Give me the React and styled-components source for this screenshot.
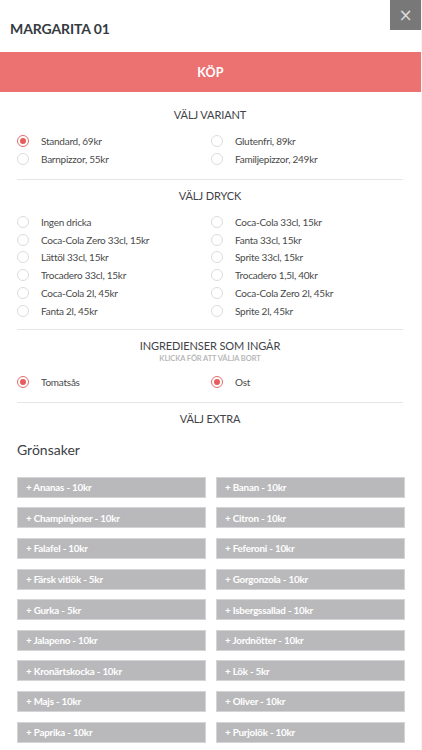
import React from "react";
import styled, { createGlobalStyle } from "styled-components";

const Global = createGlobalStyle`
  html, body { margin: 0; padding: 0; background: #fff; }
  body { font-family: Lato, "Open Sans", "Liberation Sans", sans-serif; }
  * { box-sizing: border-box; }
`;

const Modal = styled.div`
  width: 422px;
  background: #fff;
  position: relative;
  border-right: 1px solid #f4f4f4;
`;

const Header = styled.div`
  height: 52px;
  display: flex;
  align-items: center;
  padding: 4px 10px 0;
`;

const Title = styled.h1`
  margin: 0;
  font-size: 14px;
  font-weight: 700;
  color: #363b40;
  letter-spacing: -0.1px;
`;

const Close = styled.button`
  position: absolute;
  top: 0;
  right: 0;
  width: 31px;
  height: 30px;
  border: none;
  background: #787878;
  color: #d9d9d9;
  font-size: 17px;
  line-height: 30px;
  padding: 0;
  font-family: "DejaVu Sans", sans-serif;
`;

const BuyBar = styled.button`
  display: block;
  width: 100%;
  height: 40px;
  border: none;
  background: #ec7272;
  color: #fff;
  font-family: Lato, sans-serif;
  font-weight: 700;
  font-size: 12.5px;
  letter-spacing: 0.2px;
`;

const Body = styled.div`
  padding: 0 17px;
`;

const Section = styled.section`
  padding: ${(p) => p.$top || 8}px 0 ${(p) => p.$bottom || 9}px;
  border-bottom: ${(p) => (p.$last ? "none" : "1px solid #e6e6e6")};
  margin-right: 1px;
`;

const SectionTitle = styled.div`
  text-align: center;
  font-size: 11px;
  line-height: 16px;
  color: #3f4348;
  letter-spacing: -0.1px;
`;

const SubTitle = styled.div`
  text-align: center;
  font-size: 7.5px;
  line-height: 10px;
  color: #b8b8b8;
  font-weight: 700;
  letter-spacing: -0.1px;
`;

const OptionGrid = styled.div`
  display: grid;
  grid-template-columns: 194px 1fr;
  margin-top: 9px;
`;

const Option = styled.label`
  display: flex;
  align-items: center;
  gap: 12px;
  height: ${(p) => p.$h || 17.8}px;
  font-size: 10px;
  letter-spacing: -0.25px;
  color: #4a4a4a;
`;

const Radio = styled.span`
  width: 12px;
  height: 12px;
  border-radius: 50%;
  border: 1px solid ${(p) => (p.$on ? "#e66a6a" : "#dcdcdc")};
  display: flex;
  align-items: center;
  justify-content: center;
  flex-shrink: 0;
  &::after {
    content: "";
    width: 6px;
    height: 6px;
    border-radius: 50%;
    background: ${(p) => (p.$on ? "#e45e5e" : "transparent")};
  }
`;

const Category = styled.h2`
  margin: 13px 0 17px;
  font-size: 14px;
  line-height: 20px;
  font-weight: 400;
  color: #3d4146;
`;

const ExtraGrid = styled.div`
  display: grid;
  grid-template-columns: 189px 189px;
  column-gap: 10px;
  row-gap: 9.6px;
`;

const ExtraButton = styled.button`
  height: 21px;
  border: 1px solid #d4d4d6;
  background: #b9b9bb;
  color: #fff;
  font-family: Lato, sans-serif;
  font-weight: 700;
  font-size: 9.8px;
  text-align: left;
  padding: 0 8px;
  letter-spacing: -0.2px;
`;

const variants = [
  ["Standard, 69kr", true],
  ["Glutenfri, 89kr"],
  ["Barnpizzor, 55kr"],
  ["Familjepizzor, 249kr"],
];

const drinks = [
  "Ingen dricka",
  "Coca-Cola 33cl, 15kr",
  "Coca-Cola Zero 33cl, 15kr",
  "Fanta 33cl, 15kr",
  "Lättöl 33cl, 15kr",
  "Sprite 33cl, 15kr",
  "Trocadero 33cl, 15kr",
  "Trocadero 1,5l, 40kr",
  "Coca-Cola 2l, 45kr",
  "Coca-Cola Zero 2l, 45kr",
  "Fanta 2l, 45kr",
  "Sprite 2l, 45kr",
];

const extras = [
  "+ Ananas - 10kr",
  "+ Banan - 10kr",
  "+ Champinjoner - 10kr",
  "+ Citron - 10kr",
  "+ Falafel - 10kr",
  "+ Feferoni - 10kr",
  "+ Färsk vitlök - 5kr",
  "+ Gorgonzola - 10kr",
  "+ Gurka - 5kr",
  "+ Isbergssallad - 10kr",
  "+ Jalapeno - 10kr",
  "+ Jordnötter - 10kr",
  "+ Kronärtskocka - 10kr",
  "+ Lök - 5kr",
  "+ Majs - 10kr",
  "+ Oliver - 10kr",
  "+ Paprika - 10kr",
  "+ Purjolök - 10kr",
];

export default function App() {
  return (
    <>
      <Global />
      <Modal>
        <Header>
          <Title>MARGARITA 01</Title>
          <Close aria-label="Stäng">×</Close>
        </Header>
        <BuyBar>KÖP</BuyBar>
        <Body>
          <Section $top={15} $bottom={11}>
            <SectionTitle>VÄLJ VARIANT</SectionTitle>
            <OptionGrid>
              {variants.map(([label, on]) => (
                <Option key={label} $h={18}>
                  <Radio $on={on} />
                  {label}
                </Option>
              ))}
            </OptionGrid>
          </Section>
          <Section>
            <SectionTitle>VÄLJ DRYCK</SectionTitle>
            <OptionGrid>
              {drinks.map((d) => (
                <Option key={d}>
                  <Radio />
                  {d}
                </Option>
              ))}
            </OptionGrid>
          </Section>
          <Section $top={8} $bottom={11}>
            <SectionTitle>INGREDIENSER SOM INGÅR</SectionTitle>
            <SubTitle>KLICKA FÖR ATT VÄLJA BORT</SubTitle>
            <OptionGrid>
              <Option $h={18}>
                <Radio $on />
                Tomatsås
              </Option>
              <Option $h={18}>
                <Radio $on />
                Ost
              </Option>
            </OptionGrid>
          </Section>
          <Section $last $top={8} $bottom={20}>
            <SectionTitle>VÄLJ EXTRA</SectionTitle>
            <Category>Grönsaker</Category>
            <ExtraGrid>
              {extras.map((e) => (
                <ExtraButton key={e}>{e}</ExtraButton>
              ))}
            </ExtraGrid>
          </Section>
        </Body>
      </Modal>
    </>
  );
}
